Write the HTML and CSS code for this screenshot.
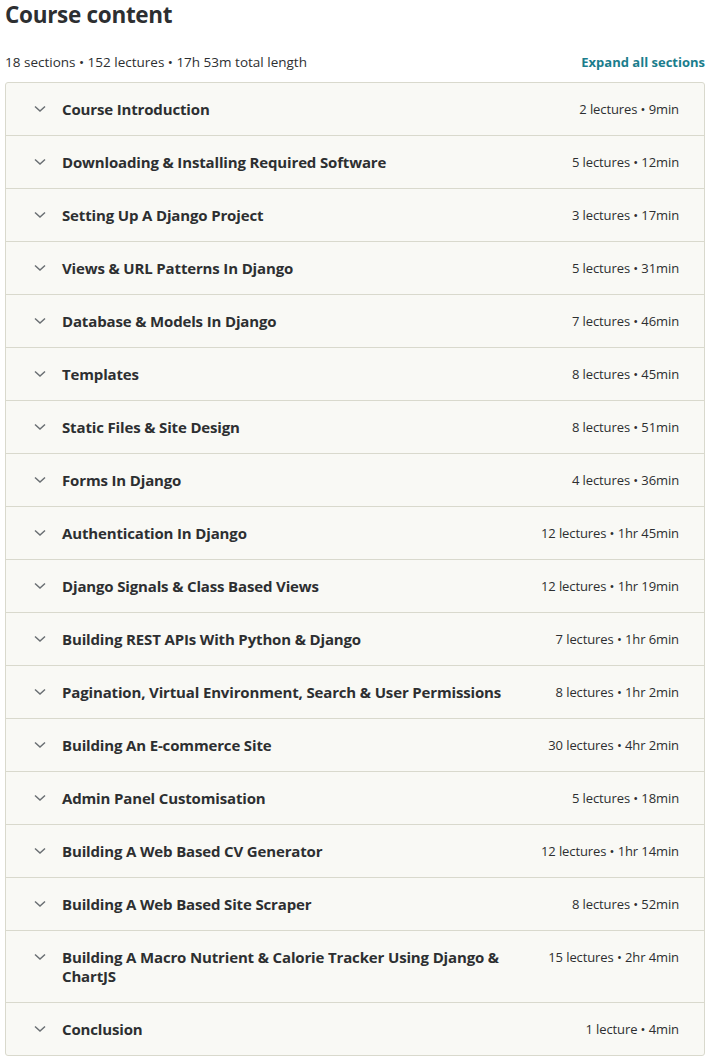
FILE: index.html
```html
<!DOCTYPE html>
<html>
<head>
<meta charset="utf-8">
<link rel="stylesheet" href="styles.css">
</head>
<body>
<div class="page">
  <h2 class="title">Course content</h2>
  <div class="meta-bar">
    <span class="meta">18 sections • 152 lectures • 17h 53m total length</span>
    <button class="expand">Expand all sections</button>
  </div>
  <div class="sections">
    <div class="row"><span class="chev"><svg width="12" height="8" viewBox="0 0 12 8"><path d="M1 1.5 L6 6 L11 1.5" fill="none" stroke="#6a6f73" stroke-width="1.5"/></svg></span><span class="name">Course Introduction</span><span class="info">2 lectures • 9min</span></div>
    <div class="row"><span class="chev"><svg width="12" height="8" viewBox="0 0 12 8"><path d="M1 1.5 L6 6 L11 1.5" fill="none" stroke="#6a6f73" stroke-width="1.5"/></svg></span><span class="name">Downloading &amp; Installing Required Software</span><span class="info">5 lectures • 12min</span></div>
    <div class="row"><span class="chev"><svg width="12" height="8" viewBox="0 0 12 8"><path d="M1 1.5 L6 6 L11 1.5" fill="none" stroke="#6a6f73" stroke-width="1.5"/></svg></span><span class="name">Setting Up A Django Project</span><span class="info">3 lectures • 17min</span></div>
    <div class="row"><span class="chev"><svg width="12" height="8" viewBox="0 0 12 8"><path d="M1 1.5 L6 6 L11 1.5" fill="none" stroke="#6a6f73" stroke-width="1.5"/></svg></span><span class="name">Views &amp; URL Patterns In Django</span><span class="info">5 lectures • 31min</span></div>
    <div class="row"><span class="chev"><svg width="12" height="8" viewBox="0 0 12 8"><path d="M1 1.5 L6 6 L11 1.5" fill="none" stroke="#6a6f73" stroke-width="1.5"/></svg></span><span class="name">Database &amp; Models In Django</span><span class="info">7 lectures • 46min</span></div>
    <div class="row"><span class="chev"><svg width="12" height="8" viewBox="0 0 12 8"><path d="M1 1.5 L6 6 L11 1.5" fill="none" stroke="#6a6f73" stroke-width="1.5"/></svg></span><span class="name">Templates</span><span class="info">8 lectures • 45min</span></div>
    <div class="row"><span class="chev"><svg width="12" height="8" viewBox="0 0 12 8"><path d="M1 1.5 L6 6 L11 1.5" fill="none" stroke="#6a6f73" stroke-width="1.5"/></svg></span><span class="name">Static Files &amp; Site Design</span><span class="info">8 lectures • 51min</span></div>
    <div class="row"><span class="chev"><svg width="12" height="8" viewBox="0 0 12 8"><path d="M1 1.5 L6 6 L11 1.5" fill="none" stroke="#6a6f73" stroke-width="1.5"/></svg></span><span class="name">Forms In Django</span><span class="info">4 lectures • 36min</span></div>
    <div class="row"><span class="chev"><svg width="12" height="8" viewBox="0 0 12 8"><path d="M1 1.5 L6 6 L11 1.5" fill="none" stroke="#6a6f73" stroke-width="1.5"/></svg></span><span class="name">Authentication In Django</span><span class="info">12 lectures • 1hr 45min</span></div>
    <div class="row"><span class="chev"><svg width="12" height="8" viewBox="0 0 12 8"><path d="M1 1.5 L6 6 L11 1.5" fill="none" stroke="#6a6f73" stroke-width="1.5"/></svg></span><span class="name">Django Signals &amp; Class Based Views</span><span class="info">12 lectures • 1hr 19min</span></div>
    <div class="row"><span class="chev"><svg width="12" height="8" viewBox="0 0 12 8"><path d="M1 1.5 L6 6 L11 1.5" fill="none" stroke="#6a6f73" stroke-width="1.5"/></svg></span><span class="name">Building REST APIs With Python &amp; Django</span><span class="info">7 lectures • 1hr 6min</span></div>
    <div class="row"><span class="chev"><svg width="12" height="8" viewBox="0 0 12 8"><path d="M1 1.5 L6 6 L11 1.5" fill="none" stroke="#6a6f73" stroke-width="1.5"/></svg></span><span class="name">Pagination, Virtual Environment, Search &amp; User Permissions</span><span class="info">8 lectures • 1hr 2min</span></div>
    <div class="row"><span class="chev"><svg width="12" height="8" viewBox="0 0 12 8"><path d="M1 1.5 L6 6 L11 1.5" fill="none" stroke="#6a6f73" stroke-width="1.5"/></svg></span><span class="name">Building An E-commerce Site</span><span class="info">30 lectures • 4hr 2min</span></div>
    <div class="row"><span class="chev"><svg width="12" height="8" viewBox="0 0 12 8"><path d="M1 1.5 L6 6 L11 1.5" fill="none" stroke="#6a6f73" stroke-width="1.5"/></svg></span><span class="name">Admin Panel Customisation</span><span class="info">5 lectures • 18min</span></div>
    <div class="row"><span class="chev"><svg width="12" height="8" viewBox="0 0 12 8"><path d="M1 1.5 L6 6 L11 1.5" fill="none" stroke="#6a6f73" stroke-width="1.5"/></svg></span><span class="name">Building A Web Based CV Generator</span><span class="info">12 lectures • 1hr 14min</span></div>
    <div class="row"><span class="chev"><svg width="12" height="8" viewBox="0 0 12 8"><path d="M1 1.5 L6 6 L11 1.5" fill="none" stroke="#6a6f73" stroke-width="1.5"/></svg></span><span class="name">Building A Web Based Site Scraper</span><span class="info">8 lectures • 52min</span></div>
    <div class="row"><span class="chev"><svg width="12" height="8" viewBox="0 0 12 8"><path d="M1 1.5 L6 6 L11 1.5" fill="none" stroke="#6a6f73" stroke-width="1.5"/></svg></span><span class="name">Building A Macro Nutrient &amp; Calorie Tracker Using Django &amp; ChartJS</span><span class="info">15 lectures • 2hr 4min</span></div>
    <div class="row"><span class="chev"><svg width="12" height="8" viewBox="0 0 12 8"><path d="M1 1.5 L6 6 L11 1.5" fill="none" stroke="#6a6f73" stroke-width="1.5"/></svg></span><span class="name">Conclusion</span><span class="info">1 lecture • 4min</span></div>
  </div>
</div>
</body>
</html>
```

FILE: styles.css
```css
html, body {
  margin: 0;
  padding: 0;
  background: #ffffff;
}
body {
  font-family: "Open Sans", "Noto Sans", "Liberation Sans", sans-serif;
  color: #2d2f31;
}
.page {
  padding: 0 2px 0 5px;
}
.title {
  margin: 0;
  font-size: 22.5px;
  font-weight: 700;
  line-height: 30px;
  letter-spacing: -0.3px;
}
.meta-bar {
  display: flex;
  justify-content: space-between;
  align-items: center;
  margin-top: 19px;
  height: 26px;
}
.meta {
  font-size: 13.5px;
}
.expand {
  border: 0;
  background: none;
  padding: 0;
  font-family: inherit;
  font-size: 13px;
  font-weight: 700;
  color: #1a7d8c;
}
.sections {
  margin-top: 7px;
  border: 1px solid #d9d9cd;
  border-radius: 3px;
  background: #f9f9f5;
}
.row {
  display: flex;
  align-items: flex-start;
  padding: 16.5px 25px 16.5px 28px;
  border-bottom: 1px solid #d9d9cd;
  line-height: 19px;
}
.row:last-child {
  border-bottom: 0;
}
.chev {
  width: 28px;
  flex: none;
  height: 19px;
  display: flex;
  align-items: center;
}
.name {
  flex: 1;
  font-size: 15px;
  font-weight: 700;
  letter-spacing: -0.15px;
  padding-right: 30px;
}
.info {
  flex: none;
  font-size: 13px;
  letter-spacing: -0.1px;
}
```
